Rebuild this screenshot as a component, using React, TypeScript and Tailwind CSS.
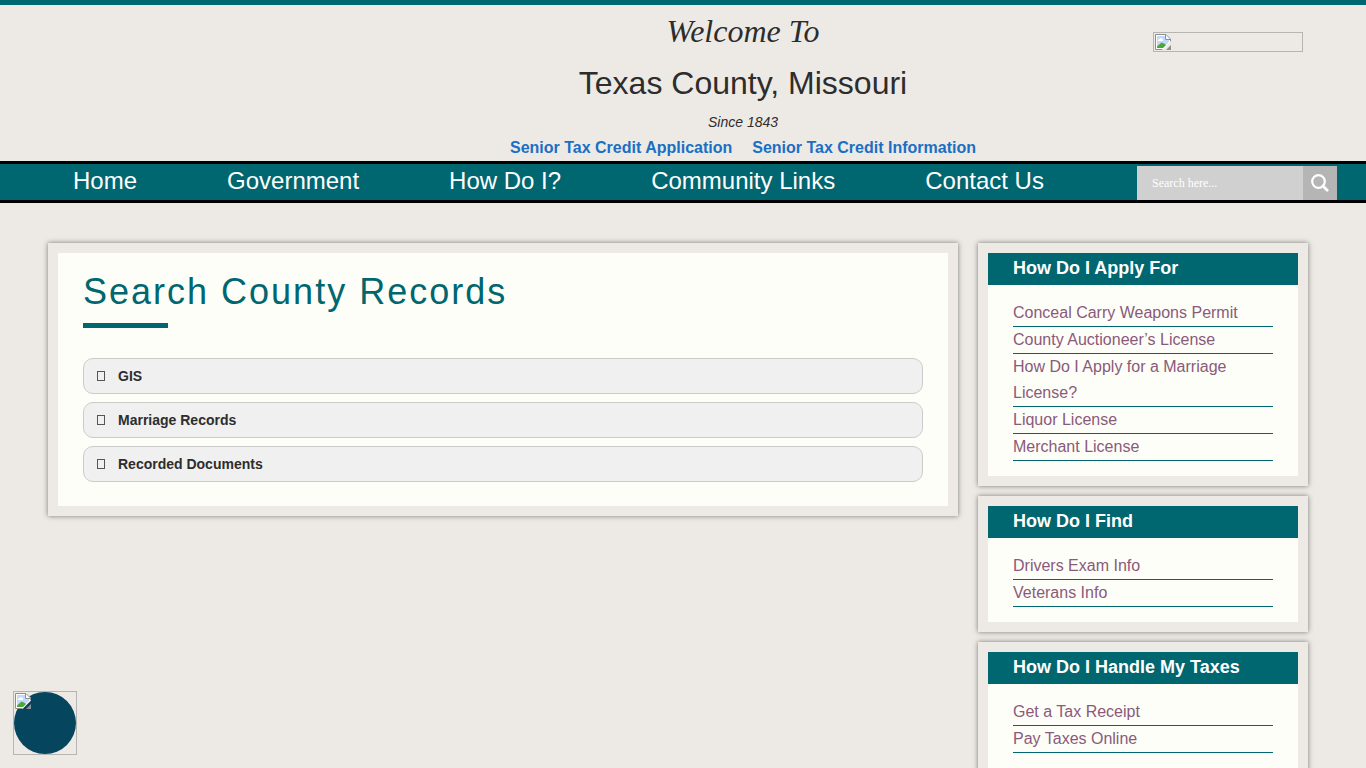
import { useState } from "react"

const navItems = ["Home", "Government", "How Do I?", "Community Links", "Contact Us"]

const records = ["GIS", "Marriage Records", "Recorded Documents"]

const widgets = [
  {
    title: "How Do I Apply For",
    links: [
      "Conceal Carry Weapons Permit",
      "County Auctioneer’s License",
      "How Do I Apply for a Marriage License?",
      "Liquor License",
      "Merchant License",
    ],
  },
  { title: "How Do I Find", links: ["Drivers Exam Info", "Veterans Info"] },
  { title: "How Do I Handle My Taxes", links: ["Get a Tax Receipt", "Pay Taxes Online"] },
]

function BrokenImage() {
  return (
    <svg width="16" height="16" viewBox="0 0 16 16" aria-hidden="true">
      <path d="M0 0H11L16 5V7.5L7.5 16H0Z" fill="#fff" />
      <path d="M2 2H10V6H14V8L8 14H2Z" fill="#c3d9fb" />
      <path d="M3 7a1.500 1.500 0 0 1 1.500-2a2 2 0 0 1 3.500 1v1Z" fill="#fff" />
      <path d="M2 14V12.500L6.500 8.500L9 9.500L11 11L8 14Z" fill="#4ca73b" />
      <path d="M7.500 15.500H0.500V0.500H11L15.500 5V7.500" fill="none" stroke="#8f8f8f" />
      <path d="M10.500 0.500V5.500H15.500" fill="none" stroke="#8f8f8f" />
      <path d="M16 11V16H11Z" fill="#8f8f8f" />
    </svg>
  )
}

function Header() {
  return (
    <header className="grid grid-cols-[1fr_486px_380px] border-t-5 border-[#00666f]">
      <div className="col-start-2 text-center text-[#2d2d2d]">
        <p className="pt-2 font-['Liberation_Serif',serif] text-[32px] leading-9 italic">Welcome To</p>
        <p className="mt-3.5 text-[32px] leading-10">Texas County, Missouri</p>
        <p className="mt-1.5 text-sm leading-[26px] italic">Since 1843</p>
        <p className="flex justify-center gap-5 text-base leading-[26px] font-bold text-[#1a6fc4]">
          <a href="#application">Senior Tax Credit Application</a>
          <a href="#information">Senior Tax Credit Information</a>
        </p>
      </div>
      <div className="flex items-start justify-end pt-[27px] pr-[63px]">
        <div className="h-5 w-[150px] overflow-hidden border border-[#b5b5b2] p-px">
          <BrokenImage />
        </div>
      </div>
    </header>
  )
}

function NavBar() {
  return (
    <nav className="flex items-end justify-between border-y-3 border-black bg-[#00666f] pr-[29px] pl-7">
      <ul className="flex">
        {navItems.map((item) => (
          <li key={item}>
            <a href="#nav" className="block px-[45px] pb-0.5 text-2xl leading-[34px] text-white">
              {item}
            </a>
          </li>
        ))}
      </ul>
      <form className="flex h-[34px] w-[200px]" onSubmit={(e) => e.preventDefault()}>
        <input
          type="search"
          aria-label="Search"
          placeholder="Search here..."
          className="min-w-0 flex-1 bg-[#d0d0d0] px-[15px] font-['Liberation_Serif',serif] text-xs text-white outline-none placeholder:text-white"
        />
        <button type="submit" aria-label="Submit search" className="flex w-[34px] items-center justify-center bg-[#b5b5b5]">
          <svg width="18" height="18" viewBox="0 0 18 18" fill="none" stroke="#fff" aria-hidden="true">
            <circle cx="7.500" cy="7.500" r="6.300" strokeWidth="2.200" />
            <path d="M12 12L16.200 16.200" strokeWidth="2.800" strokeLinecap="round" />
          </svg>
        </button>
      </form>
    </nav>
  )
}

function Records() {
  const [open, setOpen] = useState<string | null>(null)

  return (
    <main className="flex-1 border-10 border-[#edeae5] bg-[#fdfef8] px-[25px] pt-4 pb-6 shadow-[0_0_5px_#777]">
      <h1 className="text-4xl leading-[46px] tracking-[2px] text-[#00666f]">Search County Records</h1>
      <div className="mt-2 mb-[30px] h-[5px] w-[85px] bg-[#00666f]" />
      <div className="flex flex-col gap-2">
        {records.map((name) => (
          <button
            key={name}
            type="button"
            aria-expanded={open === name}
            onClick={() => setOpen(open === name ? null : name)}
            className="flex h-9 items-center gap-[13px] rounded-[10px] border border-[#cbcbc9] bg-[#f0f0f0] px-[13px] text-left text-sm font-bold text-[#2d2d2d]"
          >
            <span className="h-2.5 w-2 border border-[#555]" />
            {name}
          </button>
        ))}
      </div>
    </main>
  )
}

function Sidebar() {
  return (
    <aside className="flex w-[330px] flex-col gap-2.5">
      {widgets.map((widget) => (
        <section key={widget.title} className="border-10 border-[#edeae5] bg-[#fdfef8] shadow-[0_0_5px_#777]">
          <h2 className="bg-[#00666f] px-[25px] pb-0.5 text-lg leading-[30px] font-bold text-white">{widget.title}</h2>
          <ul className="px-[25px] py-[15px]">
            {widget.links.map((link) => (
              <li key={link} className="border-b border-[#00666f] text-base leading-[26px]">
                <a href="#page" className="text-[#8a5a7a]">
                  {link}
                </a>
              </li>
            ))}
          </ul>
        </section>
      ))}
    </aside>
  )
}

export default function App() {
  return (
    <div className="min-h-screen bg-[#edeae5] font-['Liberation_Sans',Arial,sans-serif]">
      <Header />
      <NavBar />
      <div className="mx-auto flex max-w-[1270px] items-start gap-5 pt-10 pr-2.5 pb-10">
        <Records />
        <Sidebar />
      </div>
      <button
        type="button"
        aria-label="Accessibility options"
        className="fixed bottom-[13px] left-[13px] size-16 border border-[#b5b5b2]"
      >
        <span className="block size-full rounded-full bg-[#05455e]" />
        <span className="absolute top-px left-px">
          <BrokenImage />
        </span>
      </button>
    </div>
  )
}
